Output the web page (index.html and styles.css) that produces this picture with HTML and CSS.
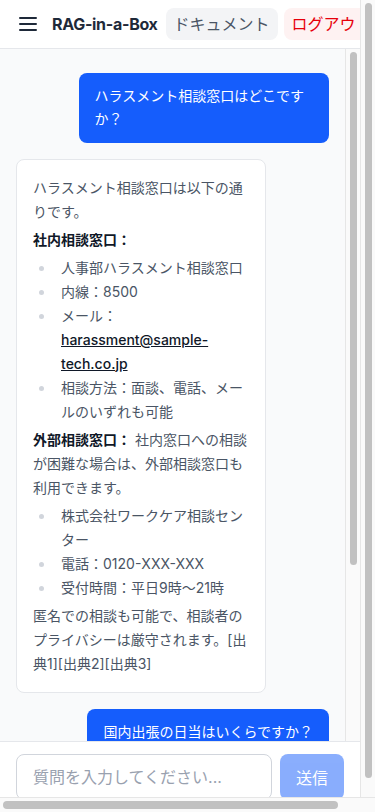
FILE: index.html
```html
<!DOCTYPE html>
<html lang="ja">
<head>
    <meta charset="UTF-8">
    <meta name="viewport" content="width=device-width, initial-scale=1.0">
    <title>RAG-in-a-Box</title>
    <link rel="stylesheet" href="styles.css">
</head>
<body>
    <div class="screen">
        <div class="app">
            <div class="app-inner">
                <header class="topbar">
                    <button class="menu-btn" aria-label="メニュー">
                        <svg width="24" height="24" viewBox="0 0 24 24" fill="none" stroke="currentColor" stroke-width="2" stroke-linecap="round">
                            <path d="M4 6h16M4 12h16M4 18h16"/>
                        </svg>
                    </button>
                    <span class="brand">RAG-in-a-Box</span>
                    <nav class="top-actions">
                        <button class="doc-btn">ドキュメント</button>
                        <button class="logout-btn">ログアウト</button>
                    </nav>
                </header>

                <div class="chat">
                    <main class="chat-scroll">
                        <div class="msg user">ハラスメント相談窓口はどこですか？</div>

                        <div class="msg bot">
                            <p>ハラスメント相談窓口は以下の通りです。</p>
                            <p><strong>社内相談窓口：</strong></p>
                            <ul>
                                <li>人事部ハラスメント相談窓口</li>
                                <li>内線：8500</li>
                                <li>メール：<a href="#">harassment@sample-tech.co.jp</a></li>
                                <li>相談方法：面談、電話、メールのいずれも可能</li>
                            </ul>
                            <p><strong>外部相談窓口：</strong> 社内窓口への相談が困難な場合は、外部相談窓口も利用できます。</p>
                            <ul>
                                <li>株式会社ワークケア相談センター</li>
                                <li>電話：0120-XXX-XXX</li>
                                <li>受付時間：平日9時～21時</li>
                            </ul>
                            <p>匿名での相談も可能で、相談者のプライバシーは厳守されます。[出典1][出典2][出典3]</p>
                        </div>

                        <div class="msg user">国内出張の日当はいくらですか？</div>

                        <div class="msg bot">
                            <p>国内出張の日当は以下の通りです。</p>
                            <ul>
                                <li>役員：3,000円</li>
                                <li>管理職：2,500円</li>
                                <li>一般社員：2,000円</li>
                            </ul>
                            <p>日帰り出張の場合は半額となります。[出典4]</p>
                        </div>
                    </main>
                    <div class="vbar inner-bar"><div class="thumb"></div></div>
                </div>

                <form class="composer" onsubmit="return false">
                    <input type="text" class="question" placeholder="質問を入力してください...">
                    <button class="send-btn" disabled>送信</button>
                </form>
            </div>
        </div>

        <!-- page scrollbars -->
        <div class="vbar page-bar"><div class="thumb"></div></div>
        <div class="hbar"><div class="thumb"></div></div>
        <div class="corner"></div>
    </div>
</body>
</html>
```

FILE: styles.css
```css
* {
    margin: 0;
    padding: 0;
    box-sizing: border-box;
}

body {
    font-family: Inter, "Noto Sans CJK JP", sans-serif;
    color: #1e2939;
    background-color: white;
}

.screen {
    display: grid;
    grid-template-columns: 360px 15px;
    grid-template-rows: 797px 15px;
    height: 812px;
}

.app {
    overflow: hidden;
}

.app-inner {
    display: flex;
    flex-direction: column;
    height: 812px;
}

/* header */

.topbar {
    display: flex;
    align-items: center;
    padding: 8px 16px;
    background-color: white;
    border-bottom: 1px solid #e5e7eb;
}

.menu-btn {
    display: flex;
    flex-shrink: 0;
    background: none;
    border: none;
    color: #1e2939;
    cursor: pointer;
}

.brand {
    margin-left: 12px;
    font-size: 16px;
    font-weight: 700;
    letter-spacing: -0.3px;
    line-height: 24px;
    white-space: nowrap;
    flex-shrink: 0;
}

.top-actions {
    display: flex;
    gap: 6px;
    margin-left: 8px;
    flex-shrink: 0;
}

.doc-btn, .logout-btn {
    font-family: inherit;
    font-size: 16px;
    line-height: 24px;
    padding: 4px 8px;
    border: none;
    border-radius: 8px;
    white-space: nowrap;
    cursor: pointer;
}

.doc-btn {
    background-color: #f3f4f6;
    color: #4a5565;
}

.logout-btn {
    background-color: #fef2f2;
    color: #e7000b;
}

/* messages */

.chat {
    flex: 1;
    min-height: 0;
    display: flex;
    background-color: #f9fafb;
}

.chat-scroll {
    flex: 1;
    min-width: 0;
    overflow: hidden;
    display: flex;
    flex-direction: column;
    gap: 16px;
    padding: 24px 16px 16px;
}

.msg {
    max-width: 80%;
    font-size: 14px;
    border-radius: 8px;
    flex-shrink: 0;
}

.msg.user {
    align-self: flex-end;
    padding: 12px 16px;
    line-height: 1.625;
    background-color: #155dfc;
    color: white;
}

.msg.bot {
    align-self: flex-start;
    padding: 16px;
    line-height: 24px;
    background-color: white;
    border: 1px solid #e5e7eb;
    color: #4a5565;
}

.msg.bot p, .msg.bot ul {
    margin: 4px 0;
}

.msg.bot > :first-child {
    margin-top: 0;
}

.msg.bot > :last-child {
    margin-bottom: 0;
}

.msg.bot strong {
    color: #101828;
    font-weight: 700;
}

.msg.bot a {
    color: #101828;
    font-weight: 500;
    text-decoration: underline;
}

.msg.bot ul {
    padding-left: 22px;
    list-style: disc;
}

.msg.bot li {
    padding-left: 6px;
}

.msg.bot li::marker {
    color: #d1d5dc;
}

/* input */

.composer {
    display: flex;
    gap: 8px;
    padding: 12px 16px;
    background-color: white;
    border-top: 1px solid #e5e7eb;
}

.question {
    flex: 1;
    min-width: 0;
    height: 46px;
    padding: 10px 16px;
    font-family: inherit;
    font-size: 16px;
    border: 1px solid #d1d5dc;
    border-radius: 8px;
    color: #1e2939;
}

.question::placeholder {
    color: #99a1af;
}

.send-btn {
    width: 64px;
    font-family: inherit;
    font-size: 16px;
    border: none;
    border-radius: 8px;
    background-color: #155dfc;
    color: white;
    opacity: 0.5;
}

/* scrollbars */

.vbar {
    width: 15px;
    flex-shrink: 0;
    padding: 3px 3px 0 4px;
    background-color: #fafafa;
    border-left: 1px solid #e6e6e6;
}

.vbar .thumb, .hbar .thumb {
    background-color: #c1c1c1;
    border-radius: 4px;
}

.inner-bar .thumb {
    height: 513px;
}

.page-bar .thumb {
    height: 775px;
}

.hbar {
    padding: 3px 0 0 3px;
    background-color: #fafafa;
    border-top: 1px solid #e6e6e6;
}

.hbar .thumb {
    width: 335px;
    height: 8px;
}

.corner {
    background-color: #fafafa;
    border-top: 1px solid #e6e6e6;
}
```
